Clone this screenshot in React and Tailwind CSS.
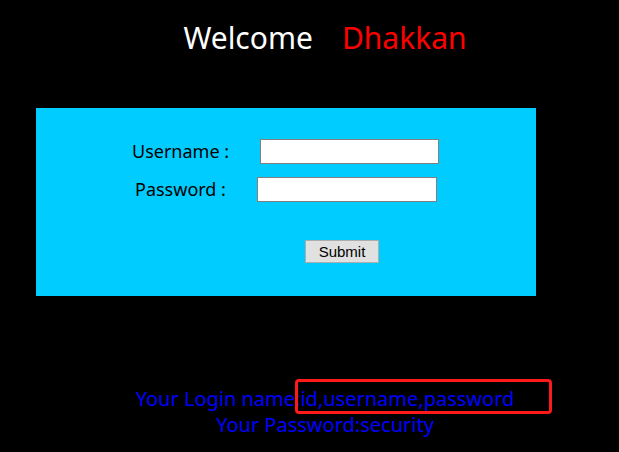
export default function App() {
  return (
    <div className="w-[619px] h-[452px] bg-black overflow-hidden" style={{ fontFamily: '"Noto Sans", "Open Sans", sans-serif' }}>
      <div className="w-[650px]">
        <div className="pt-[17px] h-[108px] text-center text-[30px] leading-[42px]">
          <span className="text-white">Welcome</span>
          <span className="inline-block w-[29px]"></span>
          <span className="text-[#ff0000]">Dhakkan</span>
        </div>
        <div className="ml-[36px] w-[500px] h-[188px] bg-[#00ccff] flex flex-col">
          <div className="flex items-center h-[25px] mt-[31px]">
            <span className="ml-[96px] w-[128px] text-[18px] text-black">Username :</span>
            <input className="w-[179px] h-[25px] bg-white border border-[#808080]" />
          </div>
          <div className="flex items-center h-[25px] mt-[13px]">
            <span className="ml-[99px] w-[122px] text-[18px] text-black">Password :</span>
            <input className="w-[180px] h-[25px] bg-white border border-[#808080]" />
          </div>
          <div className="flex mt-[38px]">
            <button className="ml-[269px] w-[74px] h-[23px] bg-[#e1e1e1] border border-[#adadad] text-[15px] leading-[20px] text-black" style={{ fontFamily: '"Liberation Sans", Arial, sans-serif' }}>Submit</button>
          </div>
        </div>
        <div className="mt-[90px] text-center text-[#0000ff] text-[20px] leading-[26px]">
          <div>
            <span>Your Login name:</span>
            <span className="relative">
              id,username,password
              <span className="absolute left-[-5px] top-[-6px] w-[257px] h-[35px] border-[3px] border-[#ff1a1a] rounded-[4px]"></span>
            </span>
          </div>
          <div>Your Password:security</div>
        </div>
      </div>
    </div>
  );
}
